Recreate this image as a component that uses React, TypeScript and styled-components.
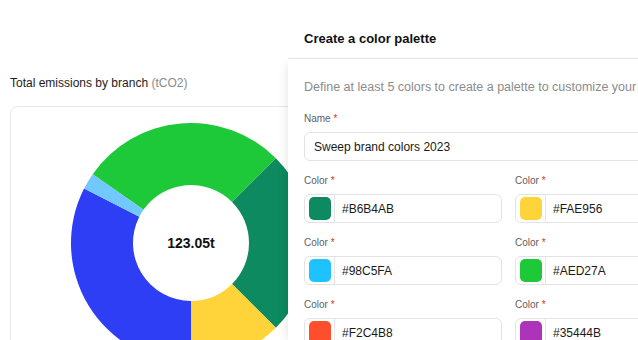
import React from 'react'
import styled, { createGlobalStyle } from 'styled-components'

const GlobalStyle = createGlobalStyle`
  html, body {
    margin: 0;
    padding: 0;
    background: #ffffff;
    overflow: hidden;
  }
  body {
    font-family: "Liberation Sans", Arial, sans-serif;
    color: #111111;
  }
`

const slices = [
  { from: -55, to: 45, color: '#1dc939' },
  { from: 45, to: 135, color: '#0d8a5f' },
  { from: 135, to: 180, color: '#ffd43b' },
  { from: 180, to: 297, color: '#2e3ef5' },
  { from: 297, to: 305, color: '#70c8ff' },
]

const palette = [
  { hex: '#B6B4AB', swatch: '#0d8a5f' },
  { hex: '#FAE956', swatch: '#ffd43b' },
  { hex: '#98C5FA', swatch: '#1ec2ff' },
  { hex: '#AED27A', swatch: '#1dc939' },
  { hex: '#F2C4B8', swatch: '#ff4e2b' },
  { hex: '#35444B', swatch: '#ad33b8' },
]

function point(cx: number, cy: number, rad: number, deg: number) {
  const a = ((deg - 90) * Math.PI) / 180
  return [cx + rad * Math.cos(a), cy + rad * Math.sin(a)]
}

function arcPath(from: number, to: number, R: number, r: number) {
  const c = R
  const [x1, y1] = point(c, c, R, from)
  const [x2, y2] = point(c, c, R, to)
  const [x3, y3] = point(c, c, r, to)
  const [x4, y4] = point(c, c, r, from)
  const large = to - from > 180 ? 1 : 0
  return `M${x1} ${y1} A${R} ${R} 0 ${large} 1 ${x2} ${y2} L${x3} ${y3} A${r} ${r} 0 ${large} 0 ${x4} ${y4} Z`
}

function Donut() {
  const R = 120
  const r = 58
  return (
    <DonutWrap>
      <svg width={R * 2} height={R * 2} viewBox={`0 0 ${R * 2} ${R * 2}`}>
        {slices.map((s) => (
          <path key={s.from} d={arcPath(s.from, s.to, R, r)} fill={s.color} />
        ))}
      </svg>
      <DonutValue>123.05t</DonutValue>
    </DonutWrap>
  )
}

export default function App() {
  return (
    <>
      <GlobalStyle />
      <Screen>
        <ChartPane>
          <ChartTitle>
            Total emissions by branch <Unit>(tCO2)</Unit>
          </ChartTitle>
          <ChartCard>
            <Donut />
          </ChartCard>
        </ChartPane>

        <Drawer>
          <DrawerHeader>Create a color palette</DrawerHeader>
          <DrawerBody>
            <Intro>Define at least 5 colors to create a palette to customize your da</Intro>
            <Field>
              <Label>
                Name <Req>*</Req>
              </Label>
              <TextBox>Sweep brand colors 2023</TextBox>
            </Field>
            <ColorGrid>
              {palette.map((p) => (
                <Field key={p.hex}>
                  <Label>
                    Color <Req>*</Req>
                  </Label>
                  <ColorBox>
                    <SwatchCell>
                      <Swatch $color={p.swatch} />
                    </SwatchCell>
                    <HexText>{p.hex}</HexText>
                  </ColorBox>
                </Field>
              ))}
            </ColorGrid>
          </DrawerBody>
        </Drawer>
      </Screen>
    </>
  )
}

const Screen = styled.div`
  position: relative;
  width: 638px;
  height: 340px;
  overflow: hidden;
`

const ChartPane = styled.div`
  display: flex;
  flex-direction: column;
  padding: 74px 0 0 10px;
`

const ChartTitle = styled.div`
  font-size: 12px;
  line-height: 18px;
  color: #1c1c1c;
`

const Unit = styled.span`
  color: #8a8a8a;
`

const ChartCard = styled.div`
  margin-top: 14px;
  width: 400px;
  height: 300px;
  border: 1px solid #e8e8e8;
  border-radius: 8px;
  padding: 16px 0 0 60px;
`

const DonutWrap = styled.div`
  position: relative;
  width: 240px;
  height: 240px;
  display: flex;
  align-items: center;
  justify-content: center;

  svg {
    position: absolute;
    inset: 0;
  }
`

const DonutValue = styled.div`
  position: relative;
  font-size: 14px;
  font-weight: 700;
  color: #111;
`

const Drawer = styled.div`
  position: absolute;
  top: 0;
  left: 288px;
  width: 420px;
  height: 340px;
  display: flex;
  flex-direction: column;
  background: #fff;
`

const DrawerHeader = styled.div`
  flex-shrink: 0;
  height: 59px;
  box-sizing: border-box;
  padding: 18px 16px 0;
  display: flex;
  align-items: center;
  font-size: 13px;
  font-weight: 700;
  border-bottom: 1px solid #e6e6e6;
`

const DrawerBody = styled.div`
  flex: 1;
  padding: 19px 16px 0;
  box-shadow: -6px 0 10px -6px rgba(0, 0, 0, 0.12);
  display: flex;
  flex-direction: column;
`

const Intro = styled.div`
  font-size: 12.5px;
  line-height: 18px;
  color: #8c8c8c;
  white-space: nowrap;
  margin-bottom: 16px;
`

const Field = styled.div`
  display: flex;
  flex-direction: column;
`

const Label = styled.div`
  font-size: 10px;
  line-height: 14px;
  color: #5e5e5e;
  margin-bottom: 6px;
`

const Req = styled.span`
  color: #d9321c;
`

const TextBox = styled.div`
  height: 29px;
  box-sizing: border-box;
  border: 1px solid #e3e3e3;
  border-radius: 6px;
  padding: 0 9px;
  display: flex;
  align-items: center;
  font-size: 12px;
  color: #1a1a1a;
`

const ColorGrid = styled.div`
  margin-top: 13px;
  display: grid;
  grid-template-columns: 198px 198px;
  column-gap: 13px;
  row-gap: 13px;
`

const ColorBox = styled.div`
  height: 29px;
  box-sizing: border-box;
  border: 1px solid #e3e3e3;
  border-radius: 6px;
  display: flex;
  align-items: stretch;
`

const SwatchCell = styled.div`
  width: 29px;
  display: flex;
  align-items: center;
  justify-content: center;
  border-right: 1px solid #e6e6e6;
`

const Swatch = styled.div<{ $color: string }>`
  width: 22px;
  height: 23px;
  border-radius: 5px;
  background: ${(p) => p.$color};
`

const HexText = styled.div`
  display: flex;
  align-items: center;
  padding-left: 7px;
  font-size: 12px;
  color: #1a1a1a;
`
